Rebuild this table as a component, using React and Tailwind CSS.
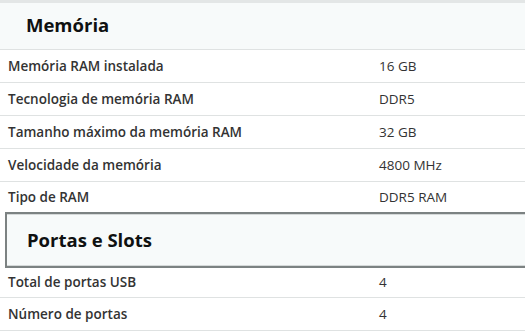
const sections = [
  {
    title: "Memória",
    rows: [
      ["Memória RAM instalada", "16 GB"],
      ["Tecnologia de memória RAM", "DDR5"],
      ["Tamanho máximo da memória RAM", "32 GB"],
      ["Velocidade da memória", "4800 MHz"],
      ["Tipo de RAM", "DDR5 RAM"],
    ],
  },
  {
    title: "Portas e Slots",
    focused: true,
    rows: [
      ["Total de portas USB", "4"],
      ["Número de portas", "4"],
    ],
  },
];

function SectionHeader({ title, focused }) {
  if (focused) {
    // keyboard-focused header gets the dark ring
    return (
      <div className="ml-[5px] flex h-[56px] items-center border-y-2 border-l-2 border-[#7c8282] bg-[#f7fafa] pl-[20px] shadow-[inset_0_-1px_0_#d5d9d9,inset_0_1px_0_#d5d9d9]">
        <h2 className="text-[18.5px] font-bold text-[#0f1111]">{title}</h2>
      </div>
    );
  }
  return (
    <div className="flex h-[49px] items-center border-t-[3px] border-[#e3e6e6] bg-[#f7fafa] pb-[3px] pl-[26px]">
      <h2 className="text-[18.5px] font-bold text-[#0f1111]">{title}</h2>
    </div>
  );
}

function SpecRow({ label, value, height, bordered }) {
  return (
    <div
      className={`flex items-center text-[13.5px] text-[#333] ${height} ${
        bordered ? "border-t border-[#dfe2e2]" : ""
      }`}
    >
      <div className="w-[379px] shrink-0 pl-2 font-semibold">{label}</div>
      <div>{value}</div>
    </div>
  );
}

function rowHeight(section, i) {
  if (section.focused && i === 0) return "h-[29px]";
  if (!section.focused && i === section.rows.length - 1) return "h-[31px]";
  return "h-[33px]";
}

export default function App() {
  return (
    <div className="h-[336px] w-[525px] overflow-hidden bg-white font-['Open_Sans',sans-serif]">
      {sections.map((s) => (
        <section key={s.title}>
          <SectionHeader title={s.title} focused={s.focused} />
          {s.rows.map(([label, value], i) => (
            <SpecRow
              key={label}
              label={label}
              value={value}
              height={rowHeight(s, i)}
              bordered={!(s.focused && i === 0)}
            />
          ))}
        </section>
      ))}
      <div className="border-t border-[#dfe2e2]" />
    </div>
  );
}
